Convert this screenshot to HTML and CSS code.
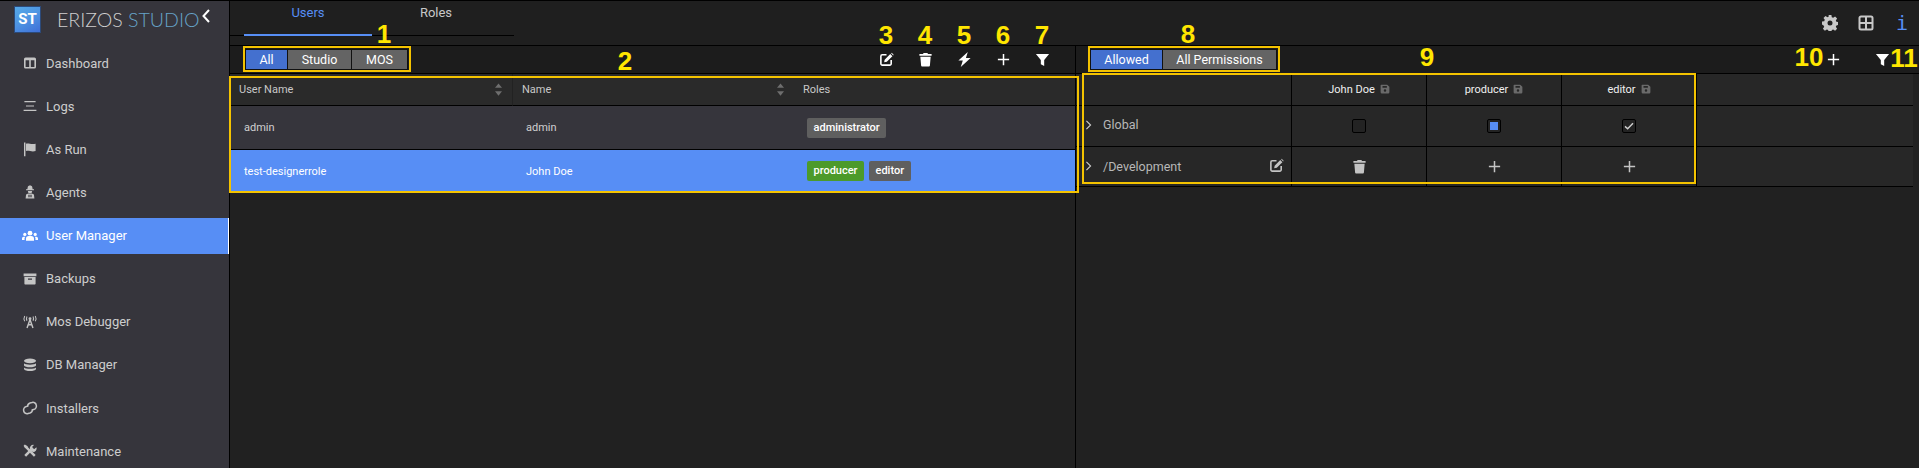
FILE: index.html
```html
<!DOCTYPE html>
<html>
<head>
  <meta charset="UTF-8">
  <title>Erizos Studio - User Manager</title>
  <link rel="stylesheet" href="styles.css">
</head>
<body>
  <svg class="defs" width="0" height="0">
    <symbol id="i-edit" viewBox="0 0 16 16"><path d="M8 3H3.500A1.500 1.500 0 0 0 2 4.500v8A1.500 1.500 0 0 0 3.500 14h8a1.500 1.500 0 0 0 1.500-1.500V8.500" fill="none" stroke="currentColor" stroke-width="1.700"/><path d="M6 8.200 12 2.200l2.300 2.300-6 6-2.800.5zM12.900 1.400l.7-.5 2 2-.5.7z" fill="currentColor"/></symbol>
    <symbol id="i-trash" viewBox="0 0 16 16"><path d="M6 1h4l.7 1.200H14.500v1.800h-13V2.200H5.300zM2.500 5h11l-.8 9.500a1 1 0 0 1-1 .9H4.300a1 1 0 0 1-1-.9z" fill="currentColor"/></symbol>
    <symbol id="i-bolt" viewBox="0 0 16 16"><path d="M11.500 0 1.500 9h4.700L4 16 14.500 6.500H9.500z" fill="currentColor"/></symbol>
    <symbol id="i-plus" viewBox="0 0 16 16"><path d="M8 2v12M2 8h12" fill="none" stroke="currentColor" stroke-width="1.600"/></symbol>
    <symbol id="i-filter" viewBox="0 0 16 16"><path d="M1 2h14L9.800 8.500V15L6.200 13V8.500z" fill="currentColor"/></symbol>
    <symbol id="i-columns" viewBox="-2 -2 20 20"><path fill-rule="evenodd" d="M2.500 1h11a2 2 0 0 1 2 2v10a2 2 0 0 1-2 2h-11a2 2 0 0 1-2-2V3a2 2 0 0 1 2-2zm0 3.500V13h4.500V4.500zm6.500 0V13h4.500V4.500z" fill="currentColor"/></symbol>
    <symbol id="i-logs" viewBox="-2 -2 20 20"><path d="M1 2.500h14M3 8h10M0 13.500h16" fill="none" stroke="currentColor" stroke-width="1.500"/></symbol>
    <symbol id="i-flag" viewBox="-2 -2 20 20"><path d="M.5 0h1.800v17H.5zM3 1.500c3-1 6 1 12 0v9c-5 1.500-8-1-12 0z" fill="currentColor"/></symbol>
    <symbol id="i-agent" viewBox="-2 -2 20 20"><path fill-rule="evenodd" d="M8 0c1.500 0 2.500.7 2.800 1.800l.5 2.700H13v1.200H3V4.500h1.700l.5-2.700C5.500.7 6.500 0 8 0zM5.300 6.700h5.400l-.7 2.600H6zM2.500 16l.6-5 2.600-1h4.600l2.600 1 .6 5zm3.500-1.500h1.500v-3H6zm2.500 0H10v-3H8.500z" fill="currentColor"/></symbol>
    <symbol id="i-users" viewBox="0 0 20 16"><circle cx="10" cy="4.500" r="3" fill="currentColor"/><circle cx="3.500" cy="6" r="2" fill="currentColor"/><circle cx="16.500" cy="6" r="2" fill="currentColor"/><path d="M5 14v-2.500A3.500 3.500 0 0 1 8.500 8h3a3.500 3.500 0 0 1 3.500 3.500V14zM0 13v-2a2 2 0 0 1 2-2h2a5 5 0 0 0-.8 4zM20 13v-2a2 2 0 0 0-2-2h-2a5 5 0 0 1 .8 4z" fill="currentColor"/></symbol>
    <symbol id="i-box" viewBox="-2 -2 20 20"><path fill-rule="evenodd" d="M0 1h16v3.500H0zM1 5.500h14v8.500a1 1 0 0 1-1 1H2a1 1 0 0 1-1-1zm4.500 2v1.500h5V7.500z" fill="currentColor"/></symbol>
    <symbol id="i-tower" viewBox="0 0 20 16"><path d="M10 5 6.300 15.500M10 5l3.700 10.500M7.800 11.500h4.400" fill="none" stroke="currentColor" stroke-width="1.800"/><circle cx="10" cy="3.800" r="1.800" fill="currentColor"/><path d="M6.200 1.200Q5 3.800 6.200 6.400M3.400.6Q1.600 3.800 3.400 7M13.800 1.200Q15 3.800 13.800 6.400M16.600.6q1.800 3.200 0 6.400" fill="none" stroke="currentColor" stroke-width="1.300"/></symbol>
    <symbol id="i-db" viewBox="-2 -2 20 20"><ellipse cx="8" cy="2.800" rx="7.500" ry="3" fill="currentColor"/><path d="M.5 5.800c2 2.400 13 2.400 15 0v2.700c-1 3-14 3-15 0zM.5 11c2 2.400 13 2.400 15 0v2c-1 3.500-14 3.500-15 0z" fill="currentColor"/></symbol>
    <symbol id="i-link" viewBox="0 0 20 16"><path d="M8.500 5H6a4.500 4.500 0 0 0-4.500 5A4 4 0 0 0 6 14h2.500a4.500 4.500 0 0 0 4-4M11.500 11H14a4.500 4.500 0 0 0 4.500-5A4 4 0 0 0 14 2h-2.500a4.500 4.500 0 0 0-4 4" fill="none" stroke="currentColor" stroke-width="1.900" transform="rotate(-14 10 8)"/></symbol>
    <symbol id="i-tools" viewBox="-2 -2 20 20"><path d="M2.500 2.500 14 14" fill="none" stroke="currentColor" stroke-width="3"/><path d="M0 1.500 1.500 0l3.500 2v2.500L4 5 1.500 4z" fill="currentColor"/><path d="M11.500 4.500 2 14" fill="none" stroke="currentColor" stroke-width="3.200"/><path d="M16 3.200 13.500 5.500 11.300 5 10.800 2.800 13 .4A4.300 4.300 0 0 0 8 6l3 3a4.300 4.300 0 0 0 5-5.800z" fill="currentColor"/></symbol>
    <symbol id="i-save" viewBox="0 0 16 16"><path fill-rule="evenodd" d="M2 1h9.500L15 4.500V13a2 2 0 0 1-2 2H3a2 2 0 0 1-2-2V2a1 1 0 0 1 1-1zm2 2v3h7V3zm4 5.500a2 2 0 1 0 0 4 2 2 0 0 0 0-4z" fill="currentColor"/></symbol>
    <symbol id="i-gear" viewBox="0 0 16 16"><path fill-rule="evenodd" d="M6.600 0h2.800l.4 2.200 1.400.6 1.900-1.300 2 2-1.300 1.900.6 1.400 2.200.4v2.800l-2.200.4-.6 1.400 1.300 1.900-2 2-1.900-1.300-1.400.6-.4 2.200H6.600l-.4-2.200-1.400-.6-1.900 1.300-2-2 1.300-1.900-.6-1.400L-.001 9.400V6.600l2.200-.4.6-1.400L1.500 2.900l2-2 1.900 1.300 1.400-.6zM8 5.500a2.500 2.500 0 1 0 0 5 2.500 2.500 0 0 0 0-5z" fill="currentColor"/></symbol>
    <symbol id="i-grid" viewBox="0 0 16 16"><path d="M3 1.500h10A1.500 1.500 0 0 1 14.500 3v10a1.500 1.500 0 0 1-1.500 1.500H3A1.500 1.500 0 0 1 1.500 13V3A1.500 1.500 0 0 1 3 1.500zM8 2v12M2 8h12" fill="none" stroke="currentColor" stroke-width="2"/></symbol>
    <symbol id="i-check" viewBox="0 0 12 10"><path d="M1 5.500 4.300 8.500 11 1.500" fill="none" stroke="currentColor" stroke-width="1.800"/></symbol>
    <symbol id="i-right" viewBox="0 0 8 12"><path d="M1.500 1 6.500 6l-5 5" fill="none" stroke="currentColor" stroke-width="1.300"/></symbol>
    <symbol id="i-sort" viewBox="0 0 8 14"><path d="M4 0 8 5H0zM4 14 0 9h8z" fill="currentColor"/></symbol>
  </svg>

  <div class="app">
    <aside class="sidebar">
      <div class="brand">
        <div class="logo">ST</div>
        <div class="brand-name">ERIZOS <span>STUDIO</span></div>
        <svg class="collapse" viewBox="0 0 8 14"><path d="M7 1 1.500 7 7 13" fill="none" stroke="currentColor" stroke-width="2"/></svg>
      </div>
      <nav class="menu">
        <a class="menu-item"><svg><use href="#i-columns"/></svg>Dashboard</a>
        <a class="menu-item"><svg><use href="#i-logs"/></svg>Logs</a>
        <a class="menu-item"><svg><use href="#i-flag"/></svg>As Run</a>
        <a class="menu-item"><svg><use href="#i-agent"/></svg>Agents</a>
        <a class="menu-item active"><svg><use href="#i-users"/></svg>User Manager</a>
        <a class="menu-item"><svg><use href="#i-box"/></svg>Backups</a>
        <a class="menu-item"><svg><use href="#i-tower"/></svg>Mos Debugger</a>
        <a class="menu-item"><svg><use href="#i-db"/></svg>DB Manager</a>
        <a class="menu-item"><svg><use href="#i-link"/></svg>Installers</a>
        <a class="menu-item"><svg><use href="#i-tools"/></svg>Maintenance</a>
      </nav>
    </aside>

    <main class="main">
      <header class="topbar">
        <div class="tabs">
          <div class="tab active">Users</div>
          <div class="tab">Roles</div>
        </div>
        <div class="top-icons">
          <svg class="top-icon"><use href="#i-gear"/></svg>
          <svg class="top-icon"><use href="#i-grid"/></svg>
          <span class="top-info">i</span>
        </div>
      </header>

      <div class="panels">
        <section class="panel panel-left">
          <div class="toolbar">
            <div class="btn-group">
              <button class="btn on btn-all">All</button>
              <button class="btn btn-studio">Studio</button>
              <button class="btn btn-mos">MOS</button>
            </div>
            <div class="tool-icons">
              <svg class="tool-icon"><use href="#i-edit"/></svg>
              <svg class="tool-icon"><use href="#i-trash"/></svg>
              <svg class="tool-icon"><use href="#i-bolt"/></svg>
              <svg class="tool-icon"><use href="#i-plus"/></svg>
              <svg class="tool-icon"><use href="#i-filter"/></svg>
            </div>
          </div>
          <table class="users">
            <thead>
              <tr>
                <th class="col-user">User Name<svg class="sort"><use href="#i-sort"/></svg></th>
                <th class="col-name">Name<svg class="sort"><use href="#i-sort"/></svg></th>
                <th>Roles</th>
              </tr>
            </thead>
            <tbody>
              <tr class="row-a">
                <td>admin</td>
                <td>admin</td>
                <td><span class="role">administrator</span></td>
              </tr>
              <tr class="row-b">
                <td>test-designerrole</td>
                <td>John Doe</td>
                <td><span class="role green">producer</span><span class="role">editor</span></td>
              </tr>
            </tbody>
          </table>
        </section>

        <section class="panel panel-right">
          <div class="toolbar toolbar-right">
            <div class="btn-group">
              <button class="btn on btn-allowed">Allowed</button>
              <button class="btn btn-perms">All Permissions</button>
            </div>
            <svg class="tool-icon add-perm"><use href="#i-plus"/></svg>
            <svg class="tool-icon filter-perm"><use href="#i-filter"/></svg>
          </div>
          <table class="perms">
            <thead>
              <tr>
                <th class="col-path"></th>
                <th class="col-perm">John Doe<svg class="save"><use href="#i-save"/></svg></th>
                <th class="col-perm">producer<svg class="save"><use href="#i-save"/></svg></th>
                <th class="col-perm">editor<svg class="save"><use href="#i-save"/></svg></th>
                <th></th>
              </tr>
            </thead>
            <tbody>
              <tr>
                <td class="path path-top"><svg class="arrow"><use href="#i-right"/></svg>Global</td>
                <td><span class="check"></span></td>
                <td><span class="check partial"></span></td>
                <td><span class="check"><svg><use href="#i-check"/></svg></span></td>
                <td></td>
              </tr>
              <tr>
                <td class="path"><svg class="arrow"><use href="#i-right"/></svg>/Development<svg class="path-edit"><use href="#i-edit"/></svg></td>
                <td><svg class="cell-icon"><use href="#i-trash"/></svg></td>
                <td><svg class="cell-icon"><use href="#i-plus"/></svg></td>
                <td><svg class="cell-icon"><use href="#i-plus"/></svg></td>
                <td></td>
              </tr>
            </tbody>
          </table>
        </section>
      </div>
    </main>
  </div>

  <!-- yellow callouts drawn on top of the screenshot -->
  <div class="mark-box box-1"></div>
  <div class="mark-box box-2"></div>
  <div class="mark-box box-8"></div>
  <div class="mark-box box-9"></div>
  <span class="mark n1">1</span>
  <span class="mark n2">2</span>
  <span class="mark n3">3</span>
  <span class="mark n4">4</span>
  <span class="mark n5">5</span>
  <span class="mark n6">6</span>
  <span class="mark n7">7</span>
  <span class="mark n8">8</span>
  <span class="mark n9">9</span>
  <span class="mark n10">10</span>
  <span class="mark n11">11</span>
</body>
</html>
```

FILE: styles.css
```css
/* page */
* {
  box-sizing: border-box;
}

html, body {
  margin: 0;
  height: 100%;
  overflow: hidden;
}

body {
  position: relative;
  background-color: #212121;
  font-family: Roboto, "Liberation Sans", sans-serif;
  color: #d0d0d0;
}

.defs {
  position: absolute;
}

.app {
  display: flex;
  height: 468px;
  border-top: 1px solid #000;
}

/* sidebar */
.sidebar {
  width: 230px;
  flex: none;
  background-color: #36353c;
  border-right: 1px solid #000;
}

.brand {
  display: flex;
  align-items: center;
  height: 44px;
  padding: 0 0 8px 14px;
}

.logo {
  display: flex;
  align-items: center;
  justify-content: center;
  width: 27px;
  height: 27px;
  background: linear-gradient(150deg, #55a9e8 0%, #4d93e2 50%, #3f6fd8 100%);
  border: 1px solid #2c4a7a;
  color: #fff;
  font-size: 15px;
  font-weight: 700;
}

.brand-name {
  margin-left: 16px;
  width: 146px;
  font-family: Lato, sans-serif;
  font-size: 19.600px;
  font-weight: 300;
  color: #cfcfcf;
  white-space: nowrap;
}

.brand-name span {
  color: #66a3c8;
}

.collapse {
  width: 8px;
  height: 14px;
  color: #fff;
  margin: -7px 0 0 -1px;
}

.menu {
  display: flex;
  flex-direction: column;
  gap: 7.150px;
}

.menu-item {
  display: flex;
  align-items: center;
  height: 36px;
  padding-left: 22px;
  font-size: 13px;
  color: #cdcdcd;
}

.menu-item svg {
  width: 16px;
  height: 16px;
  margin-right: 8px;
  color: #c4c4c4;
}

.menu-item.active {
  background-color: #578ef5;
  color: #fff;
  border-right: 1px solid #fff;
}

.menu-item.active svg {
  color: #fff;
}

/* top bar */
.main {
  flex: 1;
  min-width: 0;
}

.topbar {
  display: flex;
  justify-content: space-between;
  height: 45px;
  background-color: #1f1f1f;
  border-bottom: 1px solid #000;
}

.tabs {
  display: flex;
  width: 284px;
  height: 35px;
  padding-left: 14px;
  border-bottom: 1px solid #000;
}

.tab {
  width: 128px;
  height: 35px;
  padding-top: 4px;
  text-align: center;
  font-size: 13px;
  color: #c8c8c8;
}

.tab.active {
  color: #578ef5;
  border-bottom: 2px solid #578ef5;
}

.top-icons {
  display: flex;
  align-items: center;
  gap: 20px;
  height: 44px;
  padding-right: 9px;
}

.top-icon {
  width: 16px;
  height: 16px;
  color: #c8c8c8;
}

.top-info {
  width: 16px;
  text-align: center;
  font-family: "DejaVu Sans Mono", monospace;
  font-size: 20px;
  color: #578ef5;
}

/* panels */
.panels {
  display: flex;
}

.panel-left {
  width: 846px;
  flex: none;
  border-right: 1px solid #000;
  height: 422px;
}

.panel-right {
  flex: 1;
  min-width: 0;
}

.toolbar {
  display: flex;
  align-items: center;
  justify-content: space-between;
  height: 28px;
  padding-left: 15px;
  background-color: #1c1c1c;
  border-bottom: 1px solid #000;
}

.toolbar-right {
  padding-left: 14px;
}

.btn-group {
  display: flex;
  gap: 1px;
  padding: 1px;
  background-color: #111;
}

.btn {
  height: 19px;
  padding: 0;
  border: none;
  background-color: #646464;
  color: #fff;
  font-family: Roboto, sans-serif;
  font-size: 12.500px;
}

.btn.on {
  background-color: #4470cf;
}

.btn-all { width: 41px; }
.btn-studio { width: 63px; }
.btn-mos { width: 55px; }
.btn-allowed { width: 71px; }
.btn-perms { width: 113px; }

.tool-icons {
  display: flex;
  gap: 24px;
  padding-right: 25px;
}

.tool-icon {
  width: 15px;
  height: 15px;
  color: #fff;
}

.toolbar-right .tool-icon.add-perm {
  margin-left: auto;
  margin-right: 34px;
}

.toolbar-right .tool-icon.filter-perm {
  margin-right: 29px;
}

/* tables */
table {
  border-collapse: separate;
  border-spacing: 0;
  table-layout: fixed;
  font-size: 11px;
}

.users {
  width: 845px;
}

.users th {
  height: 32px;
  padding-left: 9px;
  background-color: #2a2a2a;
  border-bottom: 1px solid #000;
  text-align: left;
  font-weight: 400;
  color: #c8c8c8;
}

.col-user, .col-name {
  position: relative;
  width: 282px;
}

.col-name {
  border-left: 1px solid #222;
}

.sort {
  position: absolute;
  right: 10px;
  top: 9px;
  width: 7px;
  height: 13px;
  color: #6e6e6e;
}

.users td {
  padding-left: 14px;
  border-bottom: 1px solid #000;
}

.users .row-a td {
  height: 44px;
  background-color: #36353c;
  color: #d0d0d0;
}

.users .row-b td {
  height: 42px;
  background-color: #578ef5;
  border-bottom: none;
  color: #fff;
}

.users td:nth-child(3) {
  padding-left: 13px;
}

.role {
  display: inline-block;
  height: 20px;
  line-height: 19px;
  padding: 0 6.500px;
  margin-right: 5px;
  background-color: #5f5f5f;
  border-radius: 2px;
  color: #fff;
  font-size: 11px;
  font-weight: 500;
}

.role.green {
  background-color: #4c9a2a;
}

.perms {
  width: 837px;
}

.perms th {
  height: 32px;
  background-color: #272727;
  border-bottom: 1px solid #000;
  font-weight: 400;
  color: #f0f0f0;
}

.perms td {
  text-align: center;
  background-color: #272727;
  border-bottom: 1px solid #000;
}

.perms tbody tr:nth-child(1) td {
  height: 41px;
}

.perms tbody tr:nth-child(2) td {
  height: 40px;
}

.perms .col-path {
  width: 215px;
}

.perms .col-perm {
  width: 135px;
}

.perms th.col-perm, .perms td:nth-child(2), .perms td:nth-child(3),
.perms td:nth-child(4), .perms td:nth-child(5), .perms th:last-child {
  border-left: 1px solid #000;
}

.save {
  width: 10px;
  height: 10px;
  margin-left: 5px;
  color: #6a6a6a;
  vertical-align: -1px;
}

.perms .path {
  position: relative;
  padding-left: 27px;
  text-align: left;
  font-size: 12.500px;
  color: #b8b8b8;
}

.perms .path-top {
  padding-bottom: 4px;
}

.arrow {
  position: absolute;
  left: 9px;
  top: 14px;
  width: 7px;
  height: 10px;
  color: #d0d0d0;
}

.path-edit {
  position: absolute;
  right: 7px;
  top: 11px;
  width: 15px;
  height: 15px;
  color: #c4c4c4;
}

.check {
  display: inline-flex;
  align-items: center;
  justify-content: center;
  width: 14px;
  height: 14px;
  background-color: #232323;
  border: 1px solid #000;
  border-radius: 2px;
  vertical-align: middle;
}

.check svg {
  width: 10px;
  height: 8px;
  color: #cfcfcf;
}

.check.partial::after {
  content: "";
  width: 8px;
  height: 8px;
  background-color: #578ef5;
}

.cell-icon {
  width: 15px;
  height: 15px;
  color: #c4c4c4;
  vertical-align: middle;
}

/* callouts */
.mark-box {
  position: absolute;
  border: 2px solid #f4c300;
}

.box-1 { left: 243px; top: 46px; width: 168px; height: 26px; }
.box-2 { left: 229px; top: 76px; width: 850px; height: 117px; }
.box-8 { left: 1088px; top: 46px; width: 192px; height: 26px; }
.box-9 { left: 1082px; top: 73px; width: 614px; height: 111px; }

.mark {
  position: absolute;
  transform: translate(-50%, -50%);
  font-family: "Liberation Sans", sans-serif;
  font-size: 26px;
  font-weight: 700;
  line-height: 1;
  color: #ffe600;
}

.n1 { left: 384px; top: 34px; }
.n2 { left: 625px; top: 61px; }
.n3 { left: 886px; top: 35px; }
.n4 { left: 925px; top: 35px; }
.n5 { left: 964px; top: 35px; }
.n6 { left: 1003px; top: 35px; }
.n7 { left: 1042px; top: 35px; }
.n8 { left: 1188px; top: 34px; }
.n9 { left: 1427px; top: 57px; }
.n10 { left: 1809px; top: 57px; }
.n11 { left: 1904px; top: 58px; }
```
